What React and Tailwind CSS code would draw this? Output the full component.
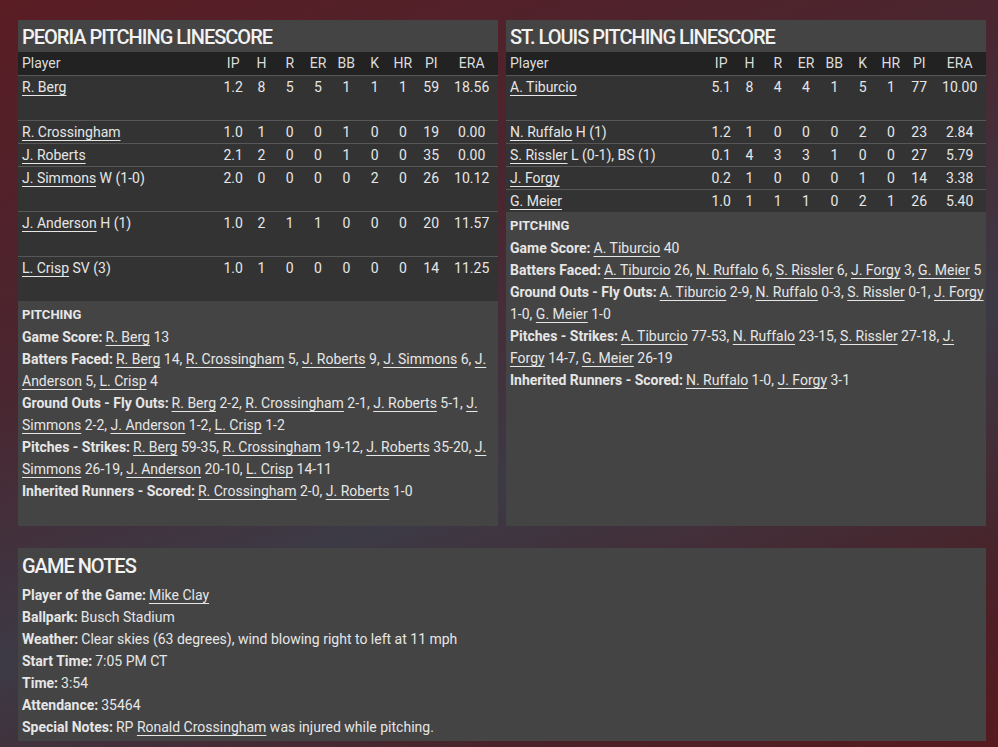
import React from 'react'

const left = [
  { name: 'R. Berg', note: '', s: ['1.2', '8', '5', '5', '1', '1', '1', '59', '18.56'], tall: true },
  { name: 'R. Crossingham', note: '', s: ['1.0', '1', '0', '0', '1', '0', '0', '19', '0.00'] },
  { name: 'J. Roberts', note: '', s: ['2.1', '2', '0', '0', '1', '0', '0', '35', '0.00'] },
  { name: 'J. Simmons', note: 'W (1-0)', s: ['2.0', '0', '0', '0', '0', '2', '0', '26', '10.12'], tall: true },
  { name: 'J. Anderson', note: 'H (1)', s: ['1.0', '2', '1', '1', '0', '0', '0', '20', '11.57'], tall: true },
  { name: 'L. Crisp', note: 'SV (3)', s: ['1.0', '1', '0', '0', '0', '0', '0', '14', '11.25'], tall: true },
]

const right = [
  { name: 'A. Tiburcio', note: '', s: ['5.1', '8', '4', '4', '1', '5', '1', '77', '10.00'], tall: true },
  { name: 'N. Ruffalo', note: 'H (1)', s: ['1.2', '1', '0', '0', '0', '2', '0', '23', '2.84'] },
  { name: 'S. Rissler', note: 'L (0-1), BS (1)', s: ['0.1', '4', '3', '3', '1', '0', '0', '27', '5.79'] },
  { name: 'J. Forgy', note: '', s: ['0.2', '1', '0', '0', '0', '1', '0', '14', '3.38'] },
  { name: 'G. Meier', note: '', s: ['1.0', '1', '1', '1', '0', '2', '1', '26', '5.40'] },
]

const cols = ['IP', 'H', 'R', 'ER', 'BB', 'K', 'HR', 'PI', 'ERA']

const L = ({ children }) => (
  <span className="underline underline-offset-[3px] decoration-1">{children}</span>
)

const B = ({ children }) => <span className="font-bold mr-[3px]">{children}</span>

const Line = ({ children }) => <div className="h-[22px] leading-[22px] whitespace-nowrap">{children}</div>

const Table = ({ rows }) => (
  <table className="w-full border-collapse text-[14px]">
    <colgroup>
      <col className="w-[201px]" />
      {cols.slice(0, 8).map((c) => (
        <col key={c} className="w-[28.3px]" />
      ))}
      <col />
    </colgroup>
    <thead>
      <tr className="bg-[#222222] h-[23px] text-[#dcdcdc]">
        <th className="text-left font-normal pl-1">Player</th>
        {cols.map((c) => (
          <th key={c} className="font-normal text-center">{c}</th>
        ))}
      </tr>
    </thead>
    <tbody className="bg-[#333333]">
      {rows.map((r) => (
        <tr key={r.name} className={`border-t border-[#575757] align-top ${r.tall ? 'h-[45px]' : 'h-[23px]'}`}>
          <td className="pl-1 leading-[22px] whitespace-nowrap">
            <L>{r.name}</L>
            {r.note && <span> {r.note}</span>}
          </td>
          {r.s.map((v, i) => (
            <td key={i} className="text-center leading-[22px]">{v}</td>
          ))}
        </tr>
      ))}
    </tbody>
  </table>
)

const Panel = ({ title, rows, children }) => (
  <div className="bg-[#444444] pb-6">
    <div className="h-8 px-1 pt-[3px] text-[20px] font-medium tracking-[-1px] leading-[28px] text-[#f2f2f2]">{title}</div>
    <Table rows={rows} />
    <div className="px-1 pt-[3px] text-[14px]">
      <div className="h-[22px] leading-[22px] text-[13px] font-bold">PITCHING</div>
      {children}
    </div>
  </div>
)

export default function App() {
  return (
    <div className="min-h-[747px] w-full pl-[18px] pr-[12px] pt-5 pb-[7px] font-['Roboto','Noto_Sans',sans-serif] text-[#e6e6e6] bg-[linear-gradient(160deg,#5a1d24_0%,#4a2630_35%,#3c3a46_60%,#4a2128_85%,#561a1d_100%)]">
      <div className="grid grid-cols-[480px_480px] gap-2">
        <Panel title="PEORIA PITCHING LINESCORE" rows={left}>
          <Line><B>Game Score:</B><L>R. Berg</L> 13</Line>
          <Line><B>Batters Faced:</B><L>R. Berg</L> 14, <L>R. Crossingham</L> 5, <L>J. Roberts</L> 9, <L>J. Simmons</L> 6, <L>J.</L></Line>
          <Line><L>Anderson</L> 5, <L>L. Crisp</L> 4</Line>
          <Line><B>Ground Outs - Fly Outs:</B><L>R. Berg</L> 2-2, <L>R. Crossingham</L> 2-1, <L>J. Roberts</L> 5-1, <L>J.</L></Line>
          <Line><L>Simmons</L> 2-2, <L>J. Anderson</L> 1-2, <L>L. Crisp</L> 1-2</Line>
          <Line><B>Pitches - Strikes:</B><L>R. Berg</L> 59-35, <L>R. Crossingham</L> 19-12, <L>J. Roberts</L> 35-20, <L>J.</L></Line>
          <Line><L>Simmons</L> 26-19, <L>J. Anderson</L> 20-10, <L>L. Crisp</L> 14-11</Line>
          <Line><B>Inherited Runners - Scored:</B><L>R. Crossingham</L> 2-0, <L>J. Roberts</L> 1-0</Line>
        </Panel>
        <Panel title="ST. LOUIS PITCHING LINESCORE" rows={right}>
          <Line><B>Game Score:</B><L>A. Tiburcio</L> 40</Line>
          <Line><B>Batters Faced:</B><L>A. Tiburcio</L> 26, <L>N. Ruffalo</L> 6, <L>S. Rissler</L> 6, <L>J. Forgy</L> 3, <L>G. Meier</L> 5</Line>
          <Line><B>Ground Outs - Fly Outs:</B><L>A. Tiburcio</L> 2-9, <L>N. Ruffalo</L> 0-3, <L>S. Rissler</L> 0-1, <L>J. Forgy</L></Line>
          <Line>1-0, <L>G. Meier</L> 1-0</Line>
          <Line><B>Pitches - Strikes:</B><L>A. Tiburcio</L> 77-53, <L>N. Ruffalo</L> 23-15, <L>S. Rissler</L> 27-18, <L>J.</L></Line>
          <Line><L>Forgy</L> 14-7, <L>G. Meier</L> 26-19</Line>
          <Line><B>Inherited Runners - Scored:</B><L>N. Ruffalo</L> 1-0, <L>J. Forgy</L> 3-1</Line>
        </Panel>
      </div>

      {/* Game notes */}
      <div className="mt-[22px] w-[968px] bg-[#444444] px-1 pb-[1px] text-[14px]">
        <div className="h-9 pt-[3px] text-[20px] font-medium tracking-[-1px] leading-[30px] text-[#f2f2f2]">GAME NOTES</div>
        <Line><B>Player of the Game:</B><L>Mike Clay</L></Line>
        <Line><B>Ballpark:</B>Busch Stadium</Line>
        <Line><B>Weather:</B>Clear skies (63 degrees), wind blowing right to left at 11 mph</Line>
        <Line><B>Start Time:</B>7:05 PM CT</Line>
        <Line><B>Time:</B>3:54</Line>
        <Line><B>Attendance:</B>35464</Line>
        <Line><B>Special Notes:</B>RP <L>Ronald Crossingham</L> was injured while pitching.</Line>
        <div className="h-[2px]" />
      </div>
    </div>
  )
}
